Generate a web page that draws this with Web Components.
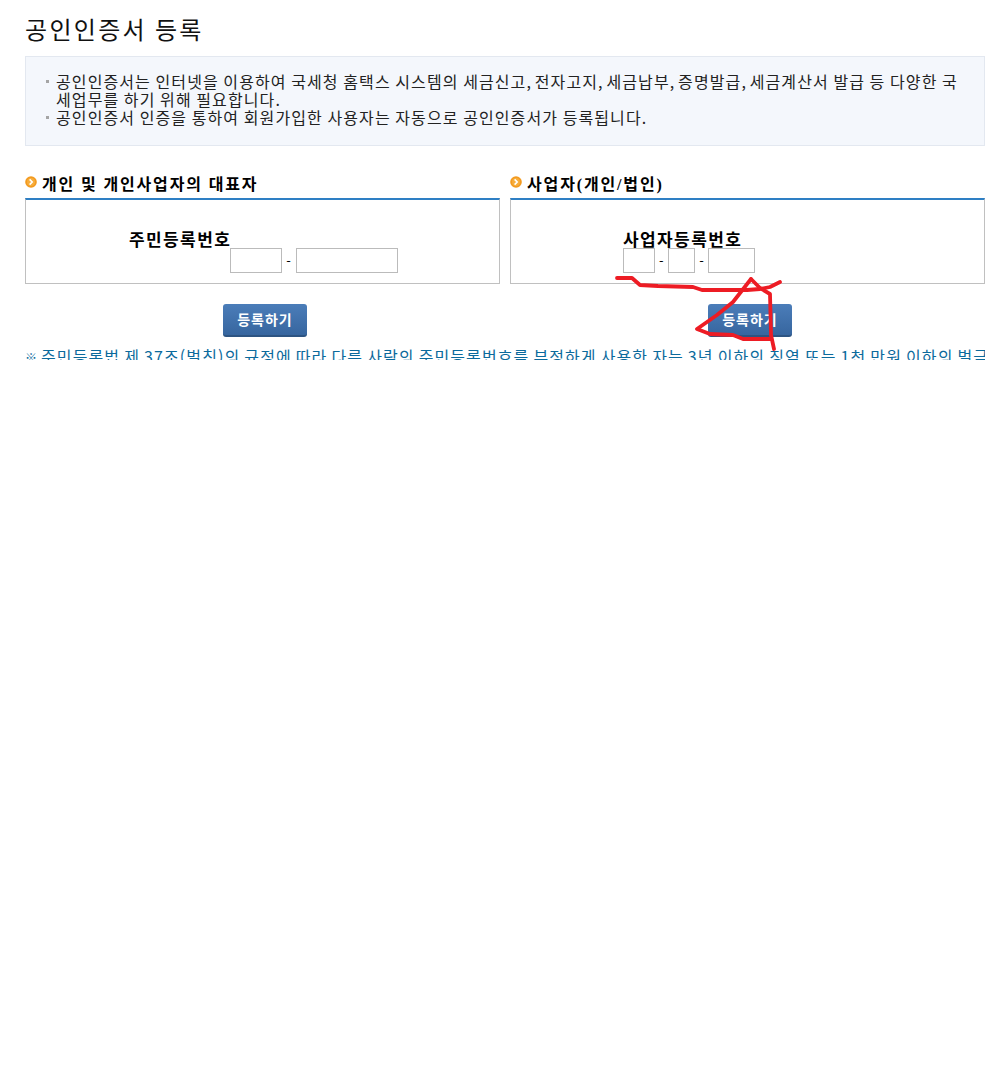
<!DOCTYPE html>
<html lang="ko">
<head>
<meta charset="utf-8">
<title>공인인증서 등록</title>
<style>
  html, body {
    background: #fff;
    margin: 0;
  }

  body {
    font-family: "Noto Sans CJK KR", sans-serif;
  }

  /* commas are narrower in the original */
  cert-notice .comma {
    letter-spacing: -0.7px;
  }
</style>
</head>
<body>
<cert-page>
  <cert-notice>
    <li>공인인증서는 인터넷을 이용하여 국세청 홈택스 시스템의 세금신고<span class="comma">,</span> 전자고지<span class="comma">,</span> 세금납부<span class="comma">,</span> 증명발급<span class="comma">,</span> 세금계산서 발급 등 다양한 국<br>세업무를 하기 위해 필요합니다.</li>
    <li>공인인증서 인증을 통하여 회원가입한 사용자는 자동으로 공인인증서가 등록됩니다.</li>
  </cert-notice>
  <cert-panel slot="left" heading="개인 및 개인사업자의 대표자" label="주민등록번호" inline fields="52,102"></cert-panel>
  <cert-panel slot="right" heading="사업자(개인/법인)" label="사업자등록번호" fields="32,27,47"></cert-panel>
</cert-page>

<script>
const pageTemplate = document.createElement('template');
pageTemplate.innerHTML = `
  <style>
    * {
      box-sizing: border-box;
    }

    :host {
      box-sizing: border-box;
      display: block;
      height: 360px;
      overflow: hidden;
      padding: 0 7px 0 25px;
      position: relative;
    }

    h1 {
      color: #111;
      font-size: 24px;
      font-weight: 400;
      height: 56px;
      letter-spacing: 2.3px;
      line-height: 58px;
      margin: 0;
      word-spacing: -1px;
    }

    #panels {
      display: grid;
      gap: 10px;
      grid-template-columns: 475px 475px;
      margin-top: 26px;
    }

    #law {
      color: #0b6a9c;
      font-size: 16px;
      letter-spacing: 1.1px;
      line-height: 18px;
      margin-top: 10px;
      overflow: hidden;
      white-space: nowrap;
      width: 960px;
      word-spacing: -1.55px;
    }

    #law span {
      font-size: 12px;
      letter-spacing: 0;
    }

    svg {
      left: 0;
      pointer-events: none;
      position: absolute;
      top: 0;
    }
  </style>

  <h1>공인인증서 등록</h1>
  <slot></slot>
  <div id="panels">
    <slot name="left"></slot>
    <slot name="right"></slot>
  </div>
  <div id="law"><span>※</span> 주민등록법 제 37조(벌칙)의 규정에 따라 다른 사람의 주민등록번호를 부정하게 사용한 자는 3년 이하의 징역 또는 1천 만원 이하의 벌금</div>

  <!-- red scribble drawn over the second button -->
  <svg width="992" height="360" fill="none" stroke="#ed1c24" stroke-width="3.8" stroke-linecap="round" stroke-linejoin="round">
    <path d="M617 278 L632 278 L640 285 L658 286 L693 287 L702 290 L747 290 L760 289 L770 287 L780 282"/>
    <path d="M751 279 L760 288 L770 294 L771 335 L774 349"/>
    <path d="M751 279 L733 302 L717 315 L697 329 L710 334 L733 335 L743 339 L771 339"/>
  </svg>
`;

class CertPage extends HTMLElement {
  constructor() {
    super();
    this.attachShadow({ mode: 'open' });
    this.shadowRoot.appendChild(pageTemplate.content.cloneNode(true));
  }
}

const noticeTemplate = document.createElement('template');
noticeTemplate.innerHTML = `
  <style>
    :host {
      background: #f4f7fc;
      border: 1px solid #e3e8f0;
      box-sizing: border-box;
      color: #222;
      display: block;
      font-size: 16px;
      height: 90px;
      letter-spacing: 1.1px;
      line-height: 18px;
      padding: 15px 0 0 30px;
      width: 960px;
      word-spacing: -1px;
    }

    ::slotted(li) {
      list-style: none;
      position: relative;
    }
  </style>
  <slot></slot>
`;

class CertNotice extends HTMLElement {
  constructor() {
    super();
    this.attachShadow({ mode: 'open' });
    this.shadowRoot.appendChild(noticeTemplate.content.cloneNode(true));
  }

  connectedCallback() {
    // small grey square in front of each item
    this.querySelectorAll('li').forEach((item) => {
      const bullet = document.createElement('i');
      bullet.style.cssText = 'position:absolute;left:-10px;top:8px;width:3px;height:3px;background:#a5a5a5';
      item.prepend(bullet);
    });
  }
}

const panelTemplate = document.createElement('template');
panelTemplate.innerHTML = `
  <style>
    * {
      box-sizing: border-box;
    }

    :host {
      display: block;
    }

    #title {
      align-items: center;
      color: #000;
      display: flex;
      font-family: "Liberation Serif", "Noto Sans CJK KR", serif;
      font-size: 16px;
      font-weight: 700;
      gap: 5px;
      height: 26px;
      letter-spacing: 1.85px;
      padding-bottom: 4px;
    }

    #title svg {
      flex: none;
      margin-top: -2px;
    }

    #box {
      border: 1px solid #c0c0c0;
      border-top: 2px solid #2e7fc4;
      height: 86px;
      padding: 27px 0 0 103px;
    }

    :host([fields="32,27,47"]) #box {
      padding-left: 112px;
    }

    #form {
      display: inline-grid;
      grid-template-columns: auto auto;
    }

    #label {
      color: #000;
      font-size: 17px;
      font-weight: 700;
      grid-column: 1;
      letter-spacing: 1.4px;
      line-height: 18px;
    }

    #fields {
      align-items: center;
      color: #000;
      display: flex;
      font-size: 13px;
      gap: 4px;
      grid-column: 1;
      grid-row: 2;
      white-space: nowrap;
    }

    #fields span {
      width: 5.2px;
    }

    :host([inline]) #fields {
      grid-column: 2;
      margin-left: -1px;
    }

    :host([inline]) #fields span {
      width: 5.6px;
    }

    input {
      background: #fff;
      border: 1px solid #bbb;
      display: block;
      height: 25px;
      margin: 0;
      padding: 0;
    }

    #action {
      display: flex;
      justify-content: center;
      margin-top: 20px;
      padding-left: 5px;
    }
  </style>

  <div id="title">
    <svg width="12" height="12" viewBox="0 0 12 12">
      <circle cx="6" cy="6" r="5.8" fill="#f39a1f"/>
      <circle cx="6" cy="6" r="4" fill="#f7ad3c"/>
      <path d="M4.6 3.4 L7.2 6 L4.6 8.6" fill="none" stroke="#fff" stroke-width="1.6"/>
    </svg>
    <span id="heading"></span>
  </div>
  <div id="box">
    <div id="form">
      <div id="label"></div>
      <div id="fields"></div>
    </div>
  </div>
  <div id="action"><reg-button>등록하기</reg-button></div>
`;

class CertPanel extends HTMLElement {
  constructor() {
    super();
    this.attachShadow({ mode: 'open' });
    this.shadowRoot.appendChild(panelTemplate.content.cloneNode(true));
  }

  connectedCallback() {
    this.shadowRoot.getElementById('heading').textContent = this.getAttribute('heading');
    this.shadowRoot.getElementById('label').textContent = this.getAttribute('label');

    const fields = this.shadowRoot.getElementById('fields');
    fields.innerHTML = this.getAttribute('fields')
      .split(',')
      .map((width) => `<input type="text" style="width:${width}px">`)
      .join('<span>-</span>');
  }
}

const buttonTemplate = document.createElement('template');
buttonTemplate.innerHTML = `
  <style>
    :host {
      background: linear-gradient(#4b7db9, #37669f);
      border-bottom: 2px solid #2d5482;
      border-radius: 3px;
      box-sizing: border-box;
      color: #fff;
      cursor: pointer;
      display: block;
      font-size: 14px;
      font-weight: 700;
      height: 33px;
      letter-spacing: 1px;
      line-height: 30px;
      text-align: center;
      width: 84px;
    }
  </style>
  <slot></slot>
`;

class RegButton extends HTMLElement {
  constructor() {
    super();
    this.attachShadow({ mode: 'open' });
    this.shadowRoot.appendChild(buttonTemplate.content.cloneNode(true));
  }
}

customElements.define('reg-button', RegButton);
customElements.define('cert-notice', CertNotice);
customElements.define('cert-panel', CertPanel);
customElements.define('cert-page', CertPage);
</script>
</body>
</html>
